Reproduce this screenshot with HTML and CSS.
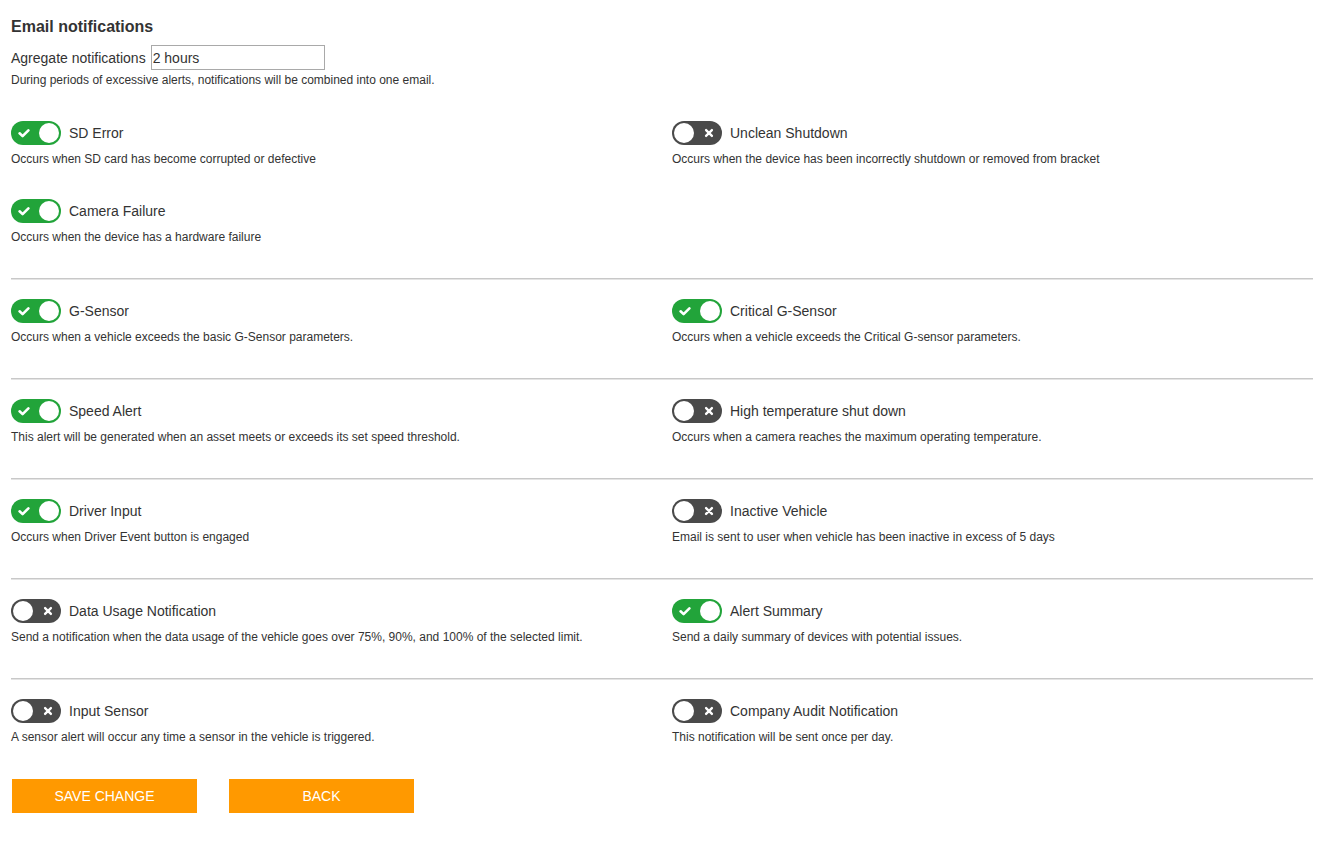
FILE: index.html
```html
<!DOCTYPE html>
<html>
<head>
<meta charset="utf-8">
<link rel="stylesheet" href="styles.css">
</head>
<body>
<div class="page">
  <h1 class="title">Email notifications</h1>
  <div class="agg">
    <label class="agg-label">Agregate notifications</label>
    <input class="agg-input" type="text" value="2 hours">
  </div>
  <p class="hint">During periods of excessive alerts, notifications will be combined into one email.</p>

  <div class="section first">
    <div class="item">
      <div class="head"><span class="toggle on"><svg class="ic" viewBox="0 0 12 12"><path d="M1.6 6.3 L4.6 9.1 L10.4 3.3" fill="none" stroke="#fff" stroke-width="2.6" stroke-linecap="round" stroke-linejoin="round"/></svg><span class="knob"></span></span><span class="label">SD Error</span></div>
      <p class="desc">Occurs when SD card has become corrupted or defective</p>
    </div>
    <div class="item">
      <div class="head"><span class="toggle off"><span class="knob"></span><svg class="ic" viewBox="0 0 12 12"><path d="M2.5 2.5 L9.5 9.5 M9.5 2.5 L2.5 9.5" fill="none" stroke="#fff" stroke-width="2.8" stroke-linecap="round"/></svg></span><span class="label">Unclean Shutdown</span></div>
      <p class="desc">Occurs when the device has been incorrectly shutdown or removed from bracket</p>
    </div>
    <div class="item">
      <div class="head"><span class="toggle on"><svg class="ic" viewBox="0 0 12 12"><path d="M1.6 6.3 L4.6 9.1 L10.4 3.3" fill="none" stroke="#fff" stroke-width="2.6" stroke-linecap="round" stroke-linejoin="round"/></svg><span class="knob"></span></span><span class="label">Camera Failure</span></div>
      <p class="desc">Occurs when the device has a hardware failure</p>
    </div>
  </div>

  <hr class="divider">
  <div class="section">
    <div class="item">
      <div class="head"><span class="toggle on"><svg class="ic" viewBox="0 0 12 12"><path d="M1.6 6.3 L4.6 9.1 L10.4 3.3" fill="none" stroke="#fff" stroke-width="2.6" stroke-linecap="round" stroke-linejoin="round"/></svg><span class="knob"></span></span><span class="label">G-Sensor</span></div>
      <p class="desc">Occurs when a vehicle exceeds the basic G-Sensor parameters.</p>
    </div>
    <div class="item">
      <div class="head"><span class="toggle on"><svg class="ic" viewBox="0 0 12 12"><path d="M1.6 6.3 L4.6 9.1 L10.4 3.3" fill="none" stroke="#fff" stroke-width="2.6" stroke-linecap="round" stroke-linejoin="round"/></svg><span class="knob"></span></span><span class="label">Critical G-Sensor</span></div>
      <p class="desc">Occurs when a vehicle exceeds the Critical G-sensor parameters.</p>
    </div>
  </div>

  <hr class="divider">
  <div class="section">
    <div class="item">
      <div class="head"><span class="toggle on"><svg class="ic" viewBox="0 0 12 12"><path d="M1.6 6.3 L4.6 9.1 L10.4 3.3" fill="none" stroke="#fff" stroke-width="2.6" stroke-linecap="round" stroke-linejoin="round"/></svg><span class="knob"></span></span><span class="label">Speed Alert</span></div>
      <p class="desc">This alert will be generated when an asset meets or exceeds its set speed threshold.</p>
    </div>
    <div class="item">
      <div class="head"><span class="toggle off"><span class="knob"></span><svg class="ic" viewBox="0 0 12 12"><path d="M2.5 2.5 L9.5 9.5 M9.5 2.5 L2.5 9.5" fill="none" stroke="#fff" stroke-width="2.8" stroke-linecap="round"/></svg></span><span class="label">High temperature shut down</span></div>
      <p class="desc">Occurs when a camera reaches the maximum operating temperature.</p>
    </div>
  </div>

  <hr class="divider">
  <div class="section">
    <div class="item">
      <div class="head"><span class="toggle on"><svg class="ic" viewBox="0 0 12 12"><path d="M1.6 6.3 L4.6 9.1 L10.4 3.3" fill="none" stroke="#fff" stroke-width="2.6" stroke-linecap="round" stroke-linejoin="round"/></svg><span class="knob"></span></span><span class="label">Driver Input</span></div>
      <p class="desc">Occurs when Driver Event button is engaged</p>
    </div>
    <div class="item">
      <div class="head"><span class="toggle off"><span class="knob"></span><svg class="ic" viewBox="0 0 12 12"><path d="M2.5 2.5 L9.5 9.5 M9.5 2.5 L2.5 9.5" fill="none" stroke="#fff" stroke-width="2.8" stroke-linecap="round"/></svg></span><span class="label">Inactive Vehicle</span></div>
      <p class="desc">Email is sent to user when vehicle has been inactive in excess of 5 days</p>
    </div>
  </div>

  <hr class="divider">
  <div class="section">
    <div class="item">
      <div class="head"><span class="toggle off"><span class="knob"></span><svg class="ic" viewBox="0 0 12 12"><path d="M2.5 2.5 L9.5 9.5 M9.5 2.5 L2.5 9.5" fill="none" stroke="#fff" stroke-width="2.8" stroke-linecap="round"/></svg></span><span class="label">Data Usage Notification</span></div>
      <p class="desc">Send a notification when the data usage of the vehicle goes over 75%, 90%, and 100% of the selected limit.</p>
    </div>
    <div class="item">
      <div class="head"><span class="toggle on"><svg class="ic" viewBox="0 0 12 12"><path d="M1.6 6.3 L4.6 9.1 L10.4 3.3" fill="none" stroke="#fff" stroke-width="2.6" stroke-linecap="round" stroke-linejoin="round"/></svg><span class="knob"></span></span><span class="label">Alert Summary</span></div>
      <p class="desc">Send a daily summary of devices with potential issues.</p>
    </div>
  </div>

  <hr class="divider">
  <div class="section">
    <div class="item">
      <div class="head"><span class="toggle off"><span class="knob"></span><svg class="ic" viewBox="0 0 12 12"><path d="M2.5 2.5 L9.5 9.5 M9.5 2.5 L2.5 9.5" fill="none" stroke="#fff" stroke-width="2.8" stroke-linecap="round"/></svg></span><span class="label">Input Sensor</span></div>
      <p class="desc">A sensor alert will occur any time a sensor in the vehicle is triggered.</p>
    </div>
    <div class="item">
      <div class="head"><span class="toggle off"><span class="knob"></span><svg class="ic" viewBox="0 0 12 12"><path d="M2.5 2.5 L9.5 9.5 M9.5 2.5 L2.5 9.5" fill="none" stroke="#fff" stroke-width="2.8" stroke-linecap="round"/></svg></span><span class="label">Company Audit Notification</span></div>
      <p class="desc">This notification will be sent once per day.</p>
    </div>
  </div>

  <div class="actions">
    <button class="btn">SAVE CHANGE</button>
    <button class="btn">BACK</button>
  </div>
</div>
</body>
</html>
```
FILE: styles.css
```css
html, body {
  margin: 0;
  padding: 0;
  background: #fff;
}
body {
  font-family: "Liberation Sans", Arial, sans-serif;
  color: #333;
}
.page {
  padding: 18px 5px 40px 11px;
}
.title {
  margin: 0;
  font-size: 16px;
  line-height: 18px;
  font-weight: bold;
  color: #333;
}
.agg {
  margin-top: 9px;
  display: flex;
  align-items: center;
  gap: 5px;
  height: 25px;
}
.agg-label {
  font-size: 14px;
  color: #333;
}
.agg-input {
  box-sizing: border-box;
  width: 174px;
  height: 25px;
  margin: 0;
  border: 1px solid #a9a9a9;
  padding: 0 1px;
  font-family: "Liberation Sans", Arial, sans-serif;
  font-size: 14px;
  color: #333;
  outline: none;
}
.hint {
  margin: 3px 0 0;
  font-size: 12px;
  line-height: 14px;
}
.section {
  display: grid;
  grid-template-columns: 1fr 1fr;
  column-gap: 20px;
  row-gap: 33px;
  padding-top: 19px;
}
.section.first {
  padding-top: 34px;
}
.head {
  display: flex;
  align-items: center;
  gap: 8px;
  height: 24px;
}
.label {
  font-size: 14px;
  color: #333;
}
.desc {
  margin: 7px 0 0;
  font-size: 12px;
  line-height: 14px;
  color: #333;
}
.toggle {
  box-sizing: border-box;
  width: 50px;
  height: 24px;
  border-radius: 12px;
  display: flex;
  align-items: center;
  justify-content: space-between;
  padding: 0 2px 0 2px;
  flex: none;
}
.toggle.on {
  background: #22a43a;
  padding-left: 7px;
}
.toggle.off {
  background: #4a4a4a;
  padding-right: 8px;
}
.knob {
  width: 20px;
  height: 20px;
  border-radius: 50%;
  background: #fff;
}
.ic {
  width: 12px;
  height: 12px;
  display: block;
}
.toggle.off .ic {
  width: 10px;
  height: 10px;
}
.divider {
  margin: 34px 0 0;
  height: 0;
  border: 0;
  border-top: 1px solid #c8c8c8;
  border-bottom: 1px solid #e4e4e4;
}
.actions {
  display: flex;
  gap: 32px;
  margin-top: 35px;
  padding-left: 1px;
}
.btn {
  width: 185px;
  height: 34px;
  border: 0;
  background: #ff9900;
  color: #fff;
  font-family: "Liberation Sans", Arial, sans-serif;
  font-size: 14px;
  padding: 0;
  cursor: pointer;
}
```
